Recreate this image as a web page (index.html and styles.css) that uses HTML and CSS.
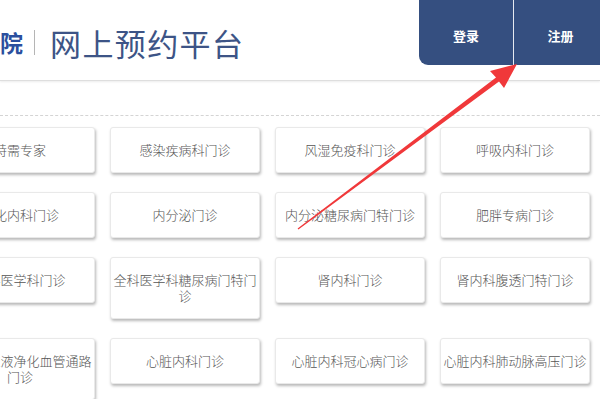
FILE: index.html
```html
<!DOCTYPE html>
<html lang="zh-CN">
<head>
<meta charset="utf-8">
<title>网上预约平台</title>
<link rel="stylesheet" href="styles.css">
</head>
<body>
<div class="page">
  <header class="header">
    <div class="brand">
      <span class="logo">院</span>
      <span class="sep"></span>
      <span class="title">网上预约平台</span>
    </div>
    <nav class="auth">
      <a class="auth-btn">登录</a>
      <a class="auth-btn">注册</a>
    </nav>
  </header>
  <main class="section">
    <div class="grid">
      <div class="card">特需专家</div>
      <div class="card">感染疾病科门诊</div>
      <div class="card">风湿免疫科门诊</div>
      <div class="card">呼吸内科门诊</div>
      <div class="card">消化内科门诊</div>
      <div class="card">内分泌门诊</div>
      <div class="card">内分泌糖尿病门特门诊</div>
      <div class="card">肥胖专病门诊</div>
      <div class="card">全科医学科门诊</div>
      <div class="card">全科医学科糖尿病门特门诊</div>
      <div class="card">肾内科门诊</div>
      <div class="card">肾内科腹透门特门诊</div>
      <div class="card">肾内科血液净化血管通路门诊</div>
      <div class="card">心脏内科门诊</div>
      <div class="card">心脏内科冠心病门诊</div>
      <div class="card">心脏内科肺动脉高压门诊</div>
    </div>
  </main>
  <svg class="arrow" width="600" height="399" viewBox="0 0 600 399" aria-hidden="true">
    <polygon points="297.6,228.6 496,77.6 490,71 517,64 504,88 499,81.6 298.4,229.4" fill="#f0383a"/>
  </svg>
</div>
</body>
</html>
```
FILE: styles.css
```css
html, body {
  margin: 0;
  padding: 0;
  overflow: hidden;
  background: #fff;
}
.page {
  position: relative;
  width: 600px;
  height: 399px;
  overflow: hidden;
  font-family: "Microsoft YaHei", "Noto Sans CJK SC", "Noto Sans", sans-serif;
}
.header {
  height: 80px;
  display: flex;
  justify-content: space-between;
  align-items: flex-start;
  border-bottom: 1px solid #dedede;
  box-shadow: 0 1px 2px rgba(0, 0, 0, 0.08);
}
.brand {
  display: flex;
  align-items: center;
  margin-top: 24px;
  height: 36px;
}
.logo {
  font-size: 23px;
  font-weight: 700;
  color: #2b4f9e;
  line-height: 1;
}
.sep {
  width: 1px;
  height: 25px;
  background: #b5b5b5;
  margin: 0 15px 0 11px;
}
.title {
  font-size: 31px;
  line-height: 1;
  letter-spacing: 1.4px;
  color: #3d5486;
}
.auth {
  display: flex;
  height: 65px;
  margin-right: -7px;
  background: #354f80;
  border-bottom-left-radius: 9px;
  overflow: hidden;
}
.auth-btn {
  width: 94px;
  padding-top: 27px;
  box-sizing: border-box;
  text-align: center;
  color: #fff;
  font-size: 13px;
  font-weight: 700;
  line-height: 18px;
}
.auth-btn + .auth-btn {
  border-left: 1px solid #e6e9f0;
}
.section {
  margin-top: 34px;
  border-top: 1px dashed #d4d4d4;
  padding-top: 11px;
}
.grid {
  display: grid;
  grid-template-columns: repeat(4, 150px);
  column-gap: 15px;
  row-gap: 19px;
  margin-left: -55px;
  align-items: start;
}
.card {
  box-sizing: border-box;
  width: 150px;
  padding: 14px 2px;
  border: 1px solid #e9e9e9;
  border-radius: 3px;
  background: #fff;
  box-shadow: 1px 2px 3px rgba(0, 0, 0, 0.28);
  text-align: center;
  font-size: 13px;
  font-weight: 300;
  line-height: 16px;
  color: #555;
}
.arrow {
  position: absolute;
  left: 0;
  top: 0;
  pointer-events: none;
}
```
